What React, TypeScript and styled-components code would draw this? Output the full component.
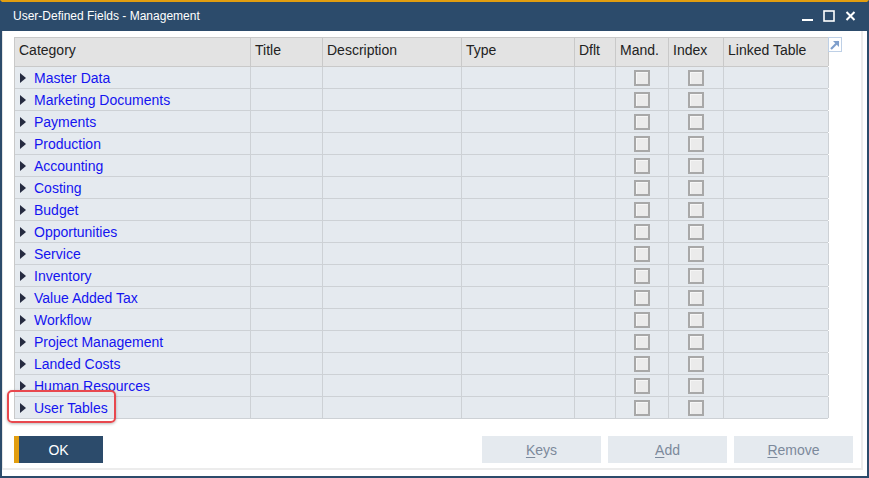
import styled, { createGlobalStyle } from 'styled-components';

const GlobalStyle = createGlobalStyle`
  html, body {
    margin: 0;
    padding: 0;
    background: #ffffff;
  }
  * {
    box-sizing: border-box;
  }
`;

const COLS = '236px 72px 139px 113px 41px 53px 55px 105px';

const Window = styled.div`
  width: 869px;
  height: 478px;
  display: flex;
  flex-direction: column;
  border-top: 2px solid #e29e10;
  border-left: 2px solid #2c4b6b;
  border-right: 2px solid #2c4b6b;
  border-bottom: 2px solid #2c4b6b;
  background: #ffffff;
  font-family: 'Liberation Sans', Arial, sans-serif;
`;

const TitleBar = styled.div`
  height: 29px;
  flex: none;
  display: flex;
  align-items: center;
  background: #2c4b6b;
  color: #ffffff;
  font-size: 12px;
  padding-left: 11px;
  padding-bottom: 1px;
  .title {
    flex: 1;
  }
  .controls {
    display: flex;
    align-items: center;
    gap: 10px;
    padding-right: 11px;
    svg {
      display: block;
    }
  }
`;

const Panel = styled.div`
  flex: 1;
  display: flex;
  flex-direction: column;
  margin: 0 4px 6px 0;
  border-left: 1px solid #e4e4e4;
  border-right: 2px solid #ececec;
  border-bottom: 2px solid #ececec;
  padding: 6px 8px 4px 11px;
`;

const TableArea = styled.div`
  display: flex;
  align-items: flex-start;
`;

const Table = styled.div`
  width: 814px;
  border-top: 1px solid #c9c9c9;
  border-left: 1px solid #c9c9c9;
  font-size: 14px;
`;

const HeaderRow = styled.div`
  display: grid;
  grid-template-columns: ${COLS};
  height: 29px;
  background: #e3e3e3;
  border-bottom: 1px solid #c9c9c9;
  color: #222222;
`;

const HeadCell = styled.div`
  border-right: 1px solid #c9c9c9;
  padding: 4px 0 0 4px;
  line-height: 16px;
  white-space: nowrap;
  overflow: hidden;
`;

const Row = styled.div`
  position: relative;
  display: grid;
  grid-template-columns: ${COLS};
  height: 22px;
  background: #e5eaef;
  border-bottom: 1px solid #cdd1d5;
`;

const Cell = styled.div<{ $center?: boolean }>`
  display: flex;
  align-items: center;
  justify-content: ${(p) => (p.$center ? 'center' : 'flex-start')};
  border-right: 1px solid #cdd1d5;
  padding-left: ${(p) => (p.$center ? '0' : '5px')};
`;

const Arrow = styled.span`
  width: 0;
  height: 0;
  border-top: 5px solid transparent;
  border-bottom: 5px solid transparent;
  border-left: 6px solid #262b40;
  margin-right: 8px;
`;

const Link = styled.span`
  color: #1414f0;
  line-height: 16px;
  padding-top: 1px;
`;

const CheckBox = styled.span`
  width: 16px;
  height: 16px;
  border: 2px solid #a8a8a8;
  background: #ebebeb;
  box-shadow: inset 1px 1px 0 #f6f6f6;
`;

const Highlight = styled.div`
  position: absolute;
  left: -8px;
  top: -7px;
  width: 109px;
  height: 33px;
  border: 2px solid #e8484e;
  border-radius: 5px;
  box-shadow: 0 1px 3px rgba(0, 0, 0, 0.28);
  pointer-events: none;
`;

const ExpandIcon = styled.div`
  margin-left: 0;
  margin-top: 0;
  width: 14px;
  height: 15px;
  border: 1px solid #bed0e6;
  display: flex;
  align-items: center;
  justify-content: center;
`;

const Footer = styled.div`
  display: flex;
  align-items: center;
  margin-top: 17px;
  gap: 7px;
  .spacer {
    flex: 1;
  }
`;

const OkButton = styled.div`
  width: 89px;
  height: 27px;
  background: #2c4b6b;
  border-left: 5px solid #e29e10;
  color: #ffffff;
  font-size: 14px;
  display: flex;
  align-items: center;
  justify-content: center;
  padding-right: 5px;
`;

const ActionButton = styled.div`
  width: 119px;
  height: 27px;
  background: #e5eaef;
  color: #7c899b;
  font-size: 14px;
  display: flex;
  align-items: center;
  justify-content: center;
  u {
    text-decoration-thickness: 1px;
    text-underline-offset: 2px;
  }
`;

const headers = ['Category', 'Title', 'Description', 'Type', 'Dflt', 'Mand.', 'Index', 'Linked Table'];

const categories = [
  'Master Data',
  'Marketing Documents',
  'Payments',
  'Production',
  'Accounting',
  'Costing',
  'Budget',
  'Opportunities',
  'Service',
  'Inventory',
  'Value Added Tax',
  'Workflow',
  'Project Management',
  'Landed Costs',
  'Human Resources',
  'User Tables',
];

const buttons = [
  { key: 'K', rest: 'eys' },
  { key: 'A', rest: 'dd' },
  { key: 'R', rest: 'emove' },
];

export default function App() {
  return (
    <>
      <GlobalStyle />
      <Window>
        <TitleBar>
          <span className="title">User-Defined Fields - Management</span>
          <div className="controls">
            <svg width="11" height="12" viewBox="0 0 11 12">
              <rect x="0" y="9" width="11" height="2" fill="#fff" />
            </svg>
            <svg width="12" height="12" viewBox="0 0 12 12">
              <rect x="1" y="1" width="10" height="10" fill="none" stroke="#fff" strokeWidth="1.6" />
            </svg>
            <svg width="11" height="12" viewBox="0 0 11 12">
              <path d="M1.5 2 L9.5 10 M9.5 2 L1.5 10" stroke="#fff" strokeWidth="2" />
            </svg>
          </div>
        </TitleBar>
        <Panel>
          <TableArea>
            <Table>
              <HeaderRow>
                {headers.map((h) => (
                  <HeadCell key={h}>{h}</HeadCell>
                ))}
              </HeaderRow>
              {categories.map((c, i) => (
                <Row key={c}>
                  <Cell>
                    <Arrow />
                    <Link>{c}</Link>
                  </Cell>
                  <Cell />
                  <Cell />
                  <Cell />
                  <Cell />
                  <Cell $center>
                    <CheckBox />
                  </Cell>
                  <Cell $center>
                    <CheckBox />
                  </Cell>
                  <Cell />
                  {i === categories.length - 1 && <Highlight />}
                </Row>
              ))}
            </Table>
            <ExpandIcon>
              <svg width="12" height="12" viewBox="0 0 12 12">
                <path d="M2 10 L9.5 2.5" stroke="#7f9fcc" strokeWidth="2.2" />
                <path d="M4 2 L10 2 L10 8 Z" fill="#7f9fcc" />
              </svg>
            </ExpandIcon>
          </TableArea>
          <Footer>
            <OkButton>OK</OkButton>
            <div className="spacer" />
            {buttons.map((b) => (
              <ActionButton key={b.key}>
                <span>
                  <u>{b.key}</u>
                  {b.rest}
                </span>
              </ActionButton>
            ))}
          </Footer>
        </Panel>
      </Window>
    </>
  );
}
